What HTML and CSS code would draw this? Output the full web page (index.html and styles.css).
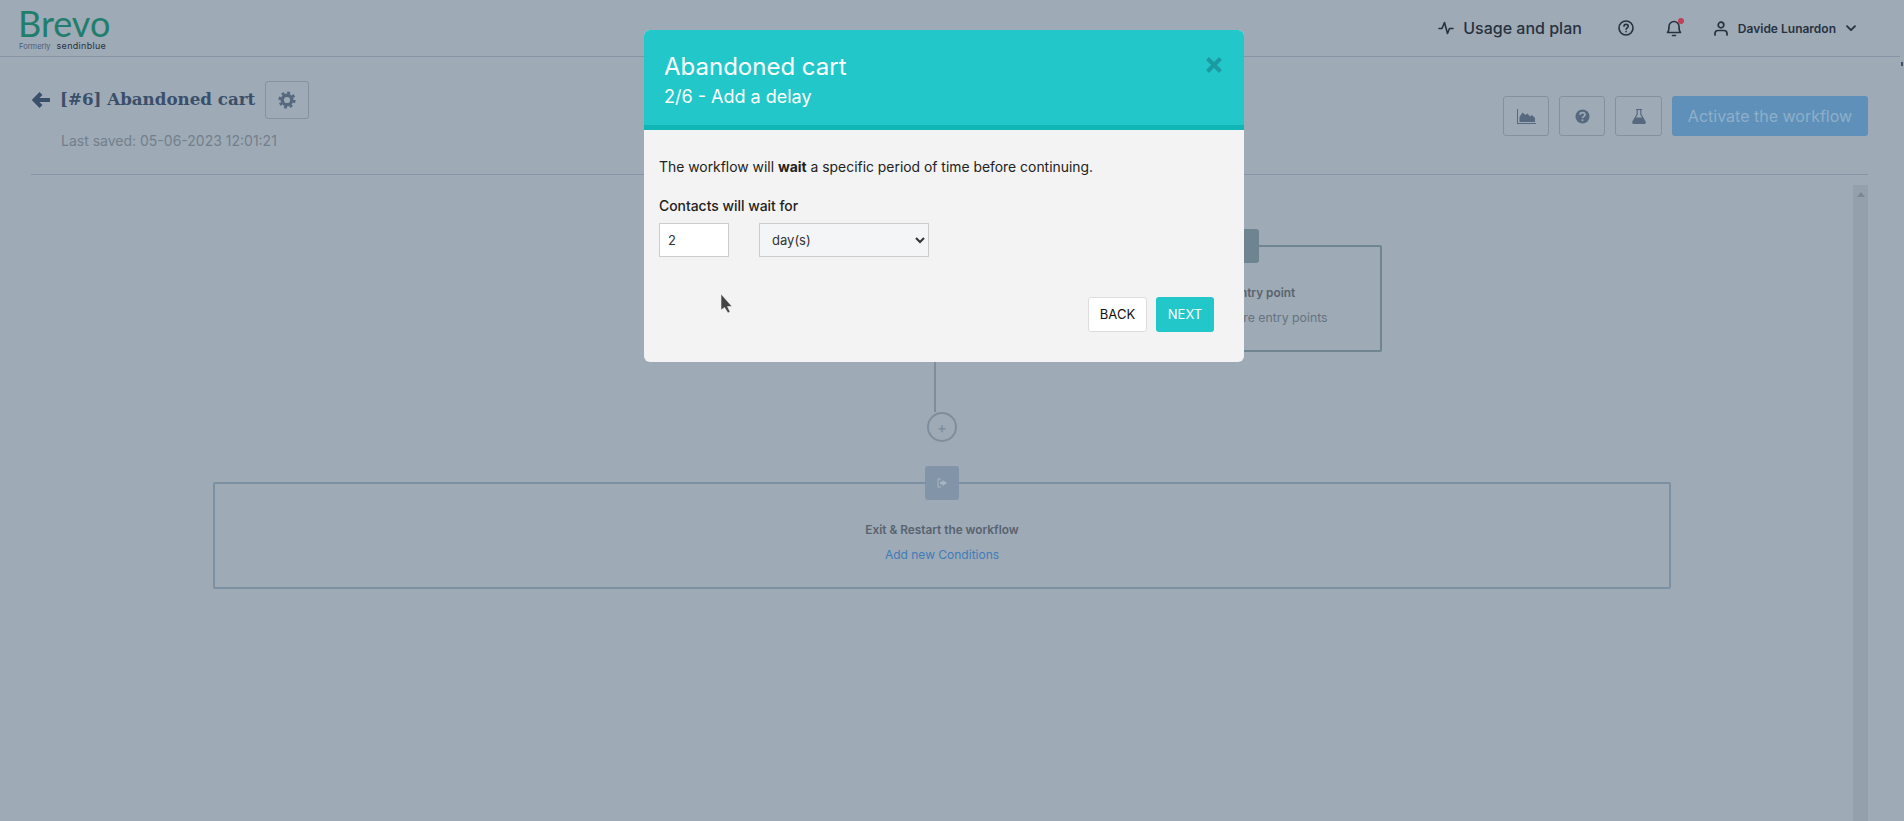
FILE: index.html
```html
<!DOCTYPE html>
<html lang="en">
<head>
  <meta charset="UTF-8" />
  <title>Abandoned cart - Brevo</title>
  <link rel="stylesheet" href="styles.css">
</head>
<body>
  <header class="topbar">
    <div class="logo">
      <div class="logo-name">Brevo</div>
      <div class="logo-sub"><span class="logo-formerly">Formerly</span><span class="logo-old">sendinblue</span></div>
    </div>
    <nav class="topnav">
      <a class="usage">
        <svg width="16" height="16" viewBox="0 0 16 16" fill="none" stroke="#27313f" stroke-width="1.6" stroke-linejoin="round" stroke-linecap="round"><path d="M1 8.500h3l2.500-6 3 11 2-5h3.500"/></svg>
        Usage and plan
      </a>
      <svg class="nav-help" width="16" height="16" viewBox="0 0 16 16" fill="none" stroke="#27313f" stroke-width="1.6" stroke-linecap="round"><circle cx="8" cy="8" r="7"/><path d="M6 6.300c0-2.600 4.200-2.600 4.200 0 0 1.600-2.100 1.500-2.100 3"/><path d="M8.100 11.600v.2"/></svg>
      <span class="bell">
        <svg width="16" height="18" viewBox="0 0 16 18" fill="none" stroke="#27313f" stroke-width="1.6" stroke-linejoin="round" stroke-linecap="round"><path d="M1.500 13.500c1.500-1.500 1.500-3 1.500-6a5 5 0 0 1 10 0c0 3 0 4.500 1.500 6z"/><path d="M6.500 16.500h3"/></svg>
        <span class="bell-dot"></span>
      </span>
      <a class="account">
        <svg width="14" height="15" viewBox="0 0 14 15" fill="none" stroke="#27313f" stroke-width="1.7" stroke-linecap="round"><circle cx="7" cy="4" r="2.800"/><path d="M1 14v-1.500c0-2 1.500-3 3-3h6c1.500 0 3 1 3 3V14"/></svg>
        <span class="account-name">Davide Lunardon</span>
        <svg class="account-caret" width="10" height="7" viewBox="0 0 10 7" fill="none" stroke="#27313f" stroke-width="1.8" stroke-linecap="round" stroke-linejoin="round"><path d="M1 1.200l4 4 4-4"/></svg>
      </a>
    </nav>
  </header>
  <span class="edge-tick"></span>

  <main class="page">
    <div class="toolbar">
      <div class="toolbar-left">
        <div class="title-row">
          <svg class="back" width="18" height="16" viewBox="0 0 18 16" fill="none" stroke="#3a4f69" stroke-width="4" stroke-linejoin="miter"><path d="M9 1.500L2.500 8 9 14.500M3 8h15"/></svg>
          <h1>[#6] Abandoned cart</h1>
          <button class="icon-btn gear-btn">
            <svg width="18" height="18" viewBox="0 0 18 18" fill="none" stroke="#56697f"><circle cx="9" cy="9" r="4.800" stroke-width="3.400"/><circle cx="9" cy="9" r="7.300" stroke-width="2.600" stroke-dasharray="2.900 2.830"/></svg>
          </button>
        </div>
        <div class="last-saved">Last saved: 05-06-2023 12:01:21</div>
      </div>
      <div class="toolbar-right">
        <button class="icon-btn">
          <svg width="19" height="15" viewBox="0 0 19 15" fill="#56697f"><path d="M0 0h1v14h18v1H0z"/><path d="M2.500 13V8l3-4.500 3 2.500 2-1.500 2.500 3 2-1.500L18 9v4z"/></svg>
        </button>
        <button class="icon-btn">
          <svg width="15" height="15" viewBox="0 0 15 15"><circle cx="7.500" cy="7.500" r="7" fill="#56697f"/><path d="M5 5.800c0-3 5-3 5 0 0 1.900-2.500 1.700-2.500 3.300" fill="none" stroke="#9eaab6" stroke-width="1.700"/><path d="M7.500 10.300v1.900" stroke="#9eaab6" stroke-width="1.700"/></svg>
        </button>
        <button class="icon-btn icon-btn-wide">
          <svg width="14" height="15" viewBox="0 0 14 15"><path d="M4 .5h6M5.200 .5v4.800L1 12.500c-.5 1 0 2 1 2h10c1 0 1.500-1 1-2L8.800 5.300V.5" fill="none" stroke="#56697f" stroke-width="1.200"/><path d="M3.500 8.500h7l2.500 4.500c.3.800-.2 1.500-1 1.500H2c-.8 0-1.300-.7-1-1.500z" fill="#56697f"/></svg>
        </button>
        <button class="activate">Activate the workflow</button>
      </div>
    </div>

    <section class="canvas">
      <div class="scroll-track"><span class="scroll-up"></span></div>

      <div class="node node-entry">
        <span class="node-icon node-icon-entry"></span>
        <div class="node-title">Add an entry point</div>
        <div class="node-text">Add one or more entry points</div>
      </div>

      <span class="connector"></span>
      <span class="add-step">+</span>

      <div class="node node-exit">
        <span class="node-icon">
          <svg width="10" height="10" viewBox="0 0 10 10" fill="#a9b5c0"><path d="M4 .500H1.500C.700 .500 .500 1 .500 1.500v7c0 .500.200 1 1 1H4v-1H1.500v-7H4z"/><path d="M5.500 2L10 5 5.500 8V6.300H3V3.700h2.500z"/></svg>
        </span>
        <div class="node-title">Exit &amp; Restart the workflow</div>
        <a class="node-link">Add new Conditions</a>
      </div>
    </section>
  </main>

  <div class="modal">
    <div class="modal-head">
      <div class="modal-title">Abandoned cart</div>
      <div class="modal-step">2/6 - Add a delay</div>
      <svg class="modal-close" width="16" height="16" viewBox="0 0 16 16" stroke="#1a9ba1" stroke-width="4"><path d="M1.500 1.500l13 13M14.500 1.500l-13 13"/></svg>
    </div>
    <div class="modal-body">
      <p class="modal-intro">The workflow will <b>wait</b> a specific period of time before continuing.</p>
      <label class="wait-label" for="waitAmount">Contacts will wait for</label>
      <div class="wait-row">
        <input id="waitAmount" class="wait-input" type="text" value="2" />
        <select class="wait-select">
          <option>day(s)</option>
          <option>hour(s)</option>
        </select>
      </div>
      <div class="modal-actions">
        <button class="btn-back">BACK</button>
        <button class="btn-next">NEXT</button>
      </div>
    </div>
  </div>

  <svg class="cursor" width="13" height="21" viewBox="0 0 13 21"><path d="M1 1v16l3.500-2.500L8 20l2-1.200-2.500-5.300H12z" fill="#444" stroke="#eee" stroke-width=".6"/></svg>
</body>
</html>
```

FILE: styles.css
```css
:root {
  --dim-bg: #9eaab6;
  --line: #8595a6;
  --node-line: #7c90a2;
  --teal: #22c7c9;
  --ink: #27313f;
}

* {
  box-sizing: border-box;
}

html,
body {
  margin: 0;
  height: 821px;
  overflow: hidden;
}

body {
  position: relative;
  background: var(--dim-bg);
  font-family: 'Inter', 'Liberation Sans', sans-serif;
  color: var(--ink);
}

/* top bar */
.topbar {
  display: flex;
  justify-content: space-between;
  align-items: center;
  height: 57px;
  width: 1900px;
  padding: 0 44px 0 18px;
  border-bottom: 1px solid var(--line);
}

.logo-name {
  font-family: 'Lato', sans-serif;
  font-size: 36px;
  line-height: 30px;
  color: #217e6d;
  margin-top: 4px;
}

.logo-sub {
  display: flex;
  align-items: baseline;
  gap: 6px;
  margin: 2px 0 0 1px;
  line-height: 11px;
}

.logo-formerly {
  font-size: 7.5px;
  color: #4b5c78;
}

.logo-old {
  font-size: 9px;
  color: #27313f;
  letter-spacing: 0.3px;
}

.topnav {
  display: flex;
  align-items: center;
}

.usage {
  display: flex;
  align-items: center;
  gap: 9px;
  font-size: 16px;
  font-weight: 500;
}

.nav-help {
  margin-left: 36px;
}

.bell {
  position: relative;
  display: flex;
  margin-left: 32px;
}

.bell-dot {
  position: absolute;
  top: -1px;
  right: -2px;
  width: 6px;
  height: 6px;
  border-radius: 50%;
  background: #bc4258;
}

.account {
  display: flex;
  align-items: center;
  margin-left: 32px;
}

.account-name {
  margin-left: 10px;
  font-size: 12px;
  font-weight: 600;
}

.account-caret {
  margin-left: 10px;
}

.edge-tick {
  position: absolute;
  top: 62px;
  left: 1901px;
  width: 2px;
  height: 4px;
  background: #3f5068;
}

/* title row and actions */
.page {
  padding: 24px 36px 0 31px;
}

.toolbar {
  display: flex;
  justify-content: space-between;
  align-items: flex-start;
  height: 94px;
  border-bottom: 1px solid var(--line);
}

.title-row {
  display: flex;
  align-items: center;
  height: 38px;
}

.back {
  margin-left: 1px;
}

h1 {
  margin: -2px 10px 0 10px;
  font-family: 'DejaVu Serif', serif;
  font-size: 16.700px;
  font-weight: 700;
  color: #3a4f69;
}

.last-saved {
  margin: 13px 0 0 30px;
  font-size: 14px;
  color: #737f8c;
}

.toolbar-right {
  display: flex;
  gap: 10px;
  margin-top: 15px;
}

.icon-btn {
  display: flex;
  justify-content: center;
  align-items: center;
  width: 46px;
  height: 40px;
  padding: 0;
  background: transparent;
  border: 1px solid #83929f;
  border-radius: 3px;
}

.icon-btn-wide {
  width: 47px;
}

.gear-btn {
  width: 44px;
  height: 38px;
}

.activate {
  width: 196px;
  height: 40px;
  padding: 0;
  background: #5f90b9;
  border: none;
  border-radius: 3px;
  font-family: inherit;
  font-size: 16px;
  color: #8eafca;
}

/* workflow diagram */
.canvas {
  position: absolute;
  top: 175px;
  left: 0;
  width: 1904px;
  height: 646px;
}

.scroll-track {
  position: absolute;
  top: 10px;
  left: 1853px;
  width: 15px;
  height: 636px;
  background: #94a1ad;
}

.scroll-up {
  position: absolute;
  top: 7px;
  left: 4px;
  border-left: 4px solid transparent;
  border-right: 4px solid transparent;
  border-bottom: 5px solid #7a8794;
}

.node {
  position: absolute;
  border: 2px solid var(--node-line);
  border-radius: 2px;
  text-align: center;
}

.node-entry {
  top: 70px;
  left: 1103px;
  width: 279px;
  height: 107px;
  border-color: #6f8591;
}

.node-exit {
  top: 307px;
  left: 213px;
  width: 1458px;
  height: 107px;
}

.node-icon {
  position: absolute;
  top: -18px;
  left: 50%;
  display: flex;
  justify-content: center;
  align-items: center;
  width: 34px;
  height: 34px;
  margin-left: -17px;
  background: #8295a8;
  border-radius: 3px;
}

.node-icon-entry {
  margin-left: -18px;
  background: #6e8491;
}

.node-title {
  margin-top: 38px;
  font-size: 11.800px;
  font-weight: 600;
  line-height: 16px;
  color: #58636f;
}

.node-text,
.node-link {
  display: block;
  margin-top: 9px;
  font-size: 12px;
  line-height: 16px;
  color: #66727f;
}

.node-text {
  font-size: 12.300px;
}

.node-link {
  color: #3f7cb8;
}

.connector {
  position: absolute;
  top: 177px;
  left: 934px;
  width: 2px;
  height: 60px;
  background: #7e8e9b;
}

.add-step {
  position: absolute;
  top: 237px;
  left: 927px;
  width: 30px;
  height: 30px;
  border: 2px solid #7e8e9b;
  border-radius: 50%;
  font-size: 14px;
  line-height: 27px;
  font-weight: 600;
  text-align: center;
  color: #7e8e9b;
}

/* modal */
.modal {
  position: absolute;
  top: 30px;
  left: 644px;
  width: 600px;
  height: 332px;
  background: #f3f3f3;
  border-radius: 6px;
  overflow: hidden;
}

.modal-head {
  position: relative;
  height: 100px;
  padding: 22px 20px 0;
  background: var(--teal);
  border-bottom: 5px solid #10b5b6;
  color: #fff;
}

.modal-title {
  font-size: 24px;
  line-height: 30px;
}

.modal-step {
  margin-top: 1px;
  font-size: 18px;
  line-height: 27px;
}

.modal-close {
  position: absolute;
  top: 27px;
  right: 22px;
}

.modal-body {
  padding: 26px 15px 0;
}

.modal-intro {
  margin: 0;
  font-size: 13.900px;
  line-height: 22px;
  color: #222;
}

.wait-label {
  display: block;
  margin-top: 17px;
  font-size: 13.900px;
  font-weight: 500;
  line-height: 22px;
  color: #222;
}

.wait-row {
  display: flex;
  gap: 30px;
  margin-top: 6px;
}

.wait-input {
  width: 70px;
  height: 34px;
  padding: 0 8px;
  background: #fff;
  border: 1px solid #ccc;
  font-family: inherit;
  font-size: 13px;
  color: #333;
}

.wait-select {
  width: 170px;
  height: 34px;
  padding: 0 8px;
  background-color: #f4f5f7;
  border: 1px solid #ccc;
  border-radius: 0;
  font-family: inherit;
  font-size: 13px;
  color: #333;
}

.modal-actions {
  display: flex;
  justify-content: flex-end;
  gap: 9px;
  margin: 40px 15px 0 0;
}

.btn-back,
.btn-next {
  width: 59px;
  height: 35px;
  padding: 0 0 1px;
  border-radius: 3px;
  font-family: inherit;
  font-size: 13px;
  font-weight: 400;
}

.btn-back {
  background: #fff;
  border: 1px solid #ddd;
  color: #111;
}

.btn-next {
  width: 58px;
  background: var(--teal);
  border: none;
  color: #fff;
}

.cursor {
  position: absolute;
  top: 293px;
  left: 720px;
}
```
